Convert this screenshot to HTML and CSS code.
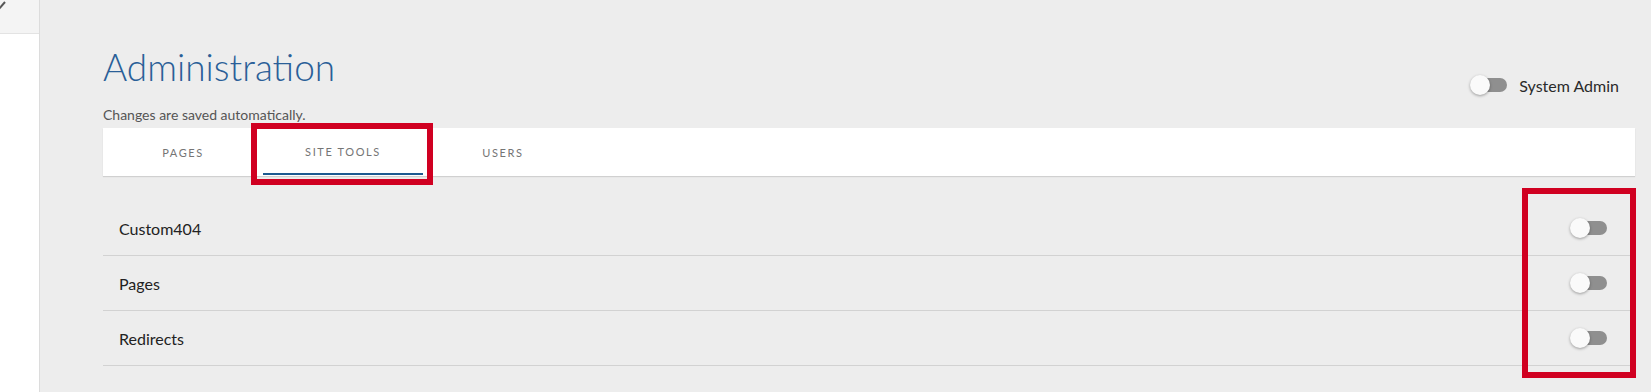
FILE: index.html
```html
<!DOCTYPE html>
<html lang="en">
<head>
<meta charset="utf-8">
<title>Administration</title>
<link rel="stylesheet" href="styles.css">
</head>
<body>
<div class="app">
  <aside class="sidebar">
    <div class="sidebar-top">
      <svg class="edit-icon" width="8" height="10" viewBox="0 0 8 10"><path d="M-1 9 L5 2" stroke="#555" stroke-width="2" fill="none"/></svg>
    </div>
  </aside>
  <main class="main">
    <div class="header">
      <h1 class="title">Administration</h1>
      <label class="sys-admin">
        <span class="switch"><span class="track"></span><span class="knob"></span></span>
        <span class="sys-label">System Admin</span>
      </label>
    </div>
    <p class="note">Changes are saved automatically.</p>
    <nav class="tabs">
      <div class="tab">PAGES</div>
      <div class="tab active">SITE TOOLS</div>
      <div class="tab">USERS</div>
    </nav>
    <ul class="list">
      <li class="row"><span class="row-label">Custom404</span><span class="switch"><span class="track"></span><span class="knob"></span></span></li>
      <li class="row"><span class="row-label">Pages</span><span class="switch"><span class="track"></span><span class="knob"></span></span></li>
      <li class="row"><span class="row-label">Redirects</span><span class="switch"><span class="track"></span><span class="knob"></span></span></li>
    </ul>
  </main>
</div>
<div class="mark mark-tab"></div>
<div class="mark mark-toggles"></div>
</body>
</html>
```

FILE: styles.css
```css
html, body {
  margin: 0;
  padding: 0;
  height: 100%;
  background: #ededed;
  font-family: Lato, "Open Sans", Arial, sans-serif;
  overflow: hidden;
}
.app {
  display: flex;
  min-height: 392px;
}
.sidebar {
  width: 39px;
  flex: none;
  background: #ffffff;
  border-right: 1px solid #dcdcdc;
}
.sidebar-top {
  height: 33px;
  background: #f4f4f4;
  border-bottom: 1px solid #e3e3e3;
}
.edit-icon {
  display: block;
}
.main {
  flex: 1;
  padding: 0 16px 0 63px;
}
.header {
  display: flex;
  justify-content: space-between;
  align-items: flex-start;
  height: 95px;
}
.title {
  margin: 45px 0 0 0;
  font-size: 37px;
  font-weight: 300;
  line-height: 1.2;
  color: #2a5f98;
}
.sys-admin {
  display: flex;
  align-items: center;
  margin-top: 75px;
  margin-right: 16px;
  gap: 12px;
}
.sys-label {
  font-size: 16px;
  color: #2a2a2a;
}
.switch {
  position: relative;
  display: block;
  width: 37px;
  height: 20px;
  flex: none;
}
.track {
  position: absolute;
  left: 1px;
  top: 3px;
  width: 36px;
  height: 14px;
  border-radius: 7px;
  background: #8f8f8f;
}
.knob {
  position: absolute;
  left: 0;
  top: 0;
  width: 20px;
  height: 20px;
  border-radius: 50%;
  background: #fafafa;
  box-shadow: 0 1px 3px rgba(0,0,0,0.35);
}
.note {
  margin: 11px 0 5px 0;
  font-size: 14px;
  line-height: 17px;
  color: #555;
}
.tabs {
  display: flex;
  height: 48px;
  background: #fff;
  box-shadow: 0 1px 1px rgba(0,0,0,0.12);
}
.tab {
  width: 160px;
  display: flex;
  align-items: center;
  justify-content: center;
  font-size: 11px;
  letter-spacing: 1.6px;
  color: #757575;
  box-sizing: border-box;
  padding-top: 1px;
}
.tab.active {
  border-bottom: 2px solid #1d5a90;
  height: 47px;
}
.list {
  list-style: none;
  margin: 25px 0 0 0;
  padding: 0;
}
.row {
  display: flex;
  align-items: center;
  justify-content: space-between;
  height: 54px;
  border-bottom: 1px solid #d2d2d2;
  padding: 0 28px 0 16px;
}
.row-label {
  font-size: 16px;
  color: #222;
}
.mark {
  position: absolute;
  border: 6px solid #d00021;
  box-sizing: border-box;
}
.mark-tab {
  left: 251px;
  top: 123px;
  width: 182px;
  height: 62px;
}
.mark-toggles {
  left: 1522px;
  top: 188px;
  width: 114px;
  height: 190px;
}
```
